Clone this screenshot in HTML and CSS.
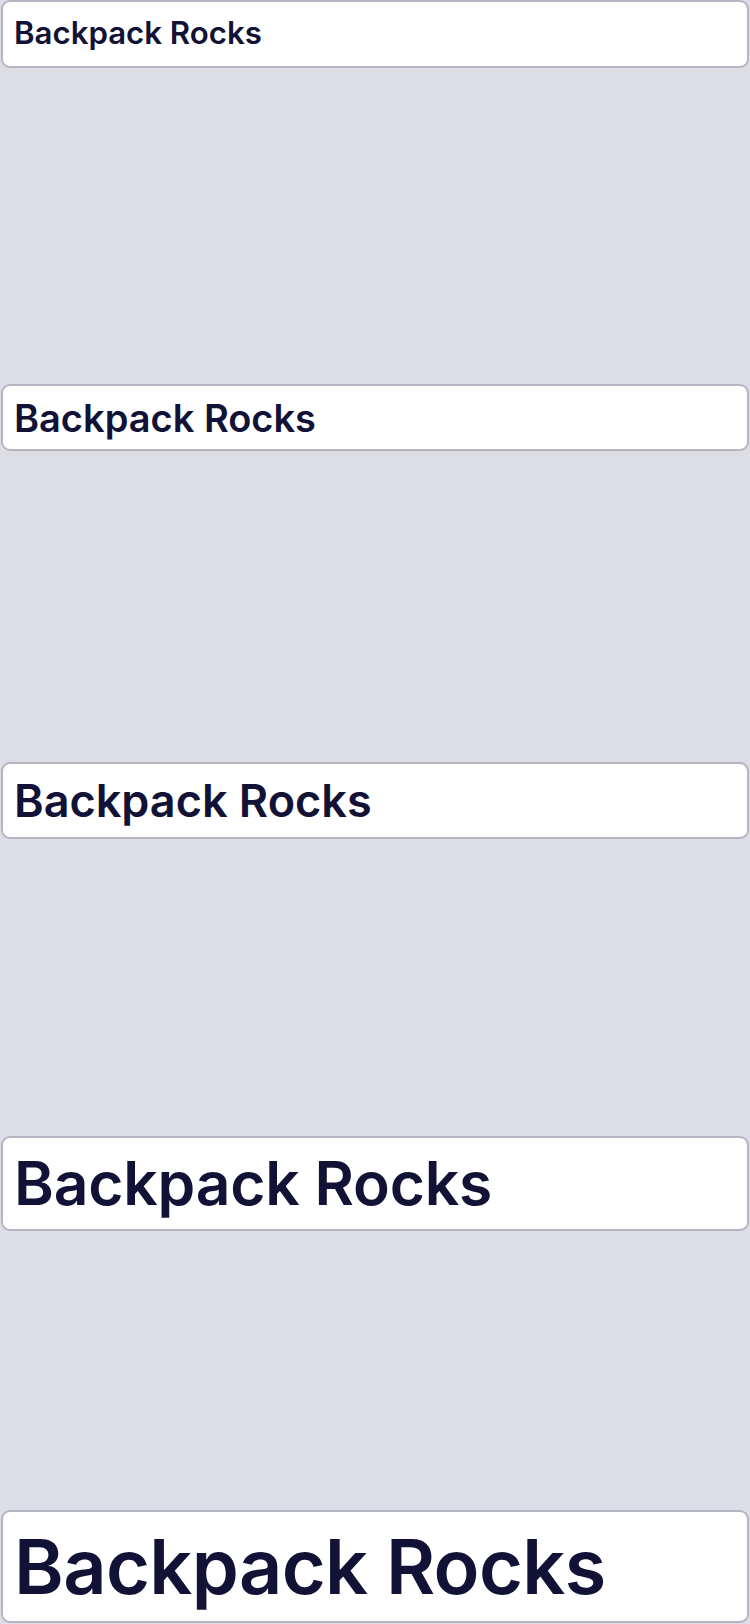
FILE: index.html
```html
<!DOCTYPE html>
<html>
<head>
<meta charset="utf-8">
<link rel="stylesheet" href="styles.css">
</head>
<body>
<main class="stack">
  <div class="field field-1"><span class="label">Backpack Rocks</span></div>
  <div class="field field-2"><span class="label">Backpack Rocks</span></div>
  <div class="field field-3"><span class="label">Backpack Rocks</span></div>
  <div class="field field-4"><span class="label">Backpack Rocks</span></div>
  <div class="field field-5"><span class="label">Backpack Rocks</span></div>
</main>
</body>
</html>
```
FILE: styles.css
```css
html, body {
  margin: 0;
  padding: 0;
  background: #DDDDE5;
}
body {
  width: 750px;
  height: 1624px;
  overflow: hidden;
  font-family: Inter, "Noto Sans", sans-serif;
  color: #111236;
}
.stack {
  display: flex;
  flex-direction: column;
  padding: 0 1px;
}
.field {
  box-sizing: border-box;
  display: flex;
  align-items: center;
  background: #FFFFFF;
  border: 2px solid #B5B4C2;
  border-radius: 9px;
  padding: 0 11px;
  font-weight: 560;
  white-space: nowrap;
}
.label { display: block; line-height: 1; }
.field-1 { height: 68px; font-size: 31.2px; }
.field-2 { height: 67px; margin-top: 316px; font-size: 38px; }
.field-3 { height: 77px; margin-top: 311px; font-size: 45px; }
.field-4 { height: 95px; margin-top: 297px; font-size: 60.5px; letter-spacing: -0.2px; }
.field-5 { height: 113px; margin-top: 279px; font-size: 75.5px; letter-spacing: -0.6px; }
```
